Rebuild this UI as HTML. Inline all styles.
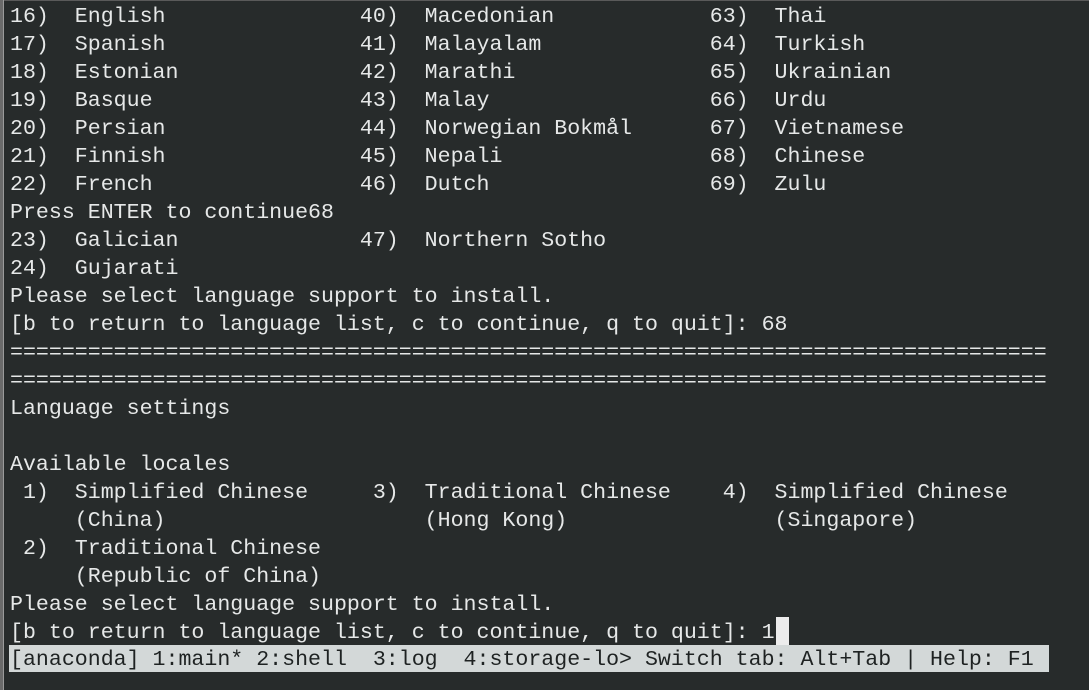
<!DOCTYPE html>
<html><head><meta charset="utf-8"><style>
html,body{margin:0;padding:0;}
body{width:1089px;height:690px;background:#272b2b;position:relative;overflow:hidden;}
.lb{position:absolute;left:0;top:0;width:3px;height:690px;background:#6a6a6a;}
.lb2{position:absolute;left:3px;top:0;width:1px;height:690px;background:#9a9a9a;}
.tb{position:absolute;left:0;top:0;width:1089px;height:1px;background:#5a5a5a;}
.l{position:absolute;left:10px;white-space:pre;font-family:"Liberation Mono",monospace;font-size:21.6px;line-height:28px;height:28px;color:#e6e8e8;margin-top:2px;}
.st{background:#d3d8d8;color:#1e2222;width:1039px;left:9px;padding-left:1px;margin-top:0;}
.cur{position:absolute;left:776px;top:617px;width:13px;height:28px;background:#ececec;}
</style></head><body>
<div class="tb"></div><div class="lb"></div><div class="lb2"></div>
<div class="l" style="top:1px">16)  English               40)  Macedonian            63)  Thai</div>
<div class="l" style="top:29px">17)  Spanish               41)  Malayalam             64)  Turkish</div>
<div class="l" style="top:57px">18)  Estonian              42)  Marathi               65)  Ukrainian</div>
<div class="l" style="top:85px">19)  Basque                43)  Malay                 66)  Urdu</div>
<div class="l" style="top:113px">20)  Persian               44)  Norwegian Bokmål      67)  Vietnamese</div>
<div class="l" style="top:141px">21)  Finnish               45)  Nepali                68)  Chinese</div>
<div class="l" style="top:169px">22)  French                46)  Dutch                 69)  Zulu</div>
<div class="l" style="top:197px">Press ENTER to continue68</div>
<div class="l" style="top:225px">23)  Galician              47)  Northern Sotho</div>
<div class="l" style="top:253px">24)  Gujarati</div>
<div class="l" style="top:281px">Please select language support to install.</div>
<div class="l" style="top:309px">[b to return to language list, c to continue, q to quit]: 68</div>
<div class="l" style="top:337px">================================================================================</div>
<div class="l" style="top:365px">================================================================================</div>
<div class="l" style="top:393px">Language settings</div>
<div class="l" style="top:449px">Available locales</div>
<div class="l" style="top:477px"> 1)  Simplified Chinese     3)  Traditional Chinese    4)  Simplified Chinese</div>
<div class="l" style="top:505px">     (China)                    (Hong Kong)                (Singapore)</div>
<div class="l" style="top:533px"> 2)  Traditional Chinese</div>
<div class="l" style="top:561px">     (Republic of China)</div>
<div class="l" style="top:589px">Please select language support to install.</div>
<div class="l" style="top:617px">[b to return to language list, c to continue, q to quit]: 1</div>
<div class="cur"></div>
<div class="l st" style="top:645px;height:27px;line-height:31px">[anaconda] 1:main* 2:shell  3:log  4:storage-lo> Switch tab: Alt+Tab | Help: F1</div>
</body></html>
